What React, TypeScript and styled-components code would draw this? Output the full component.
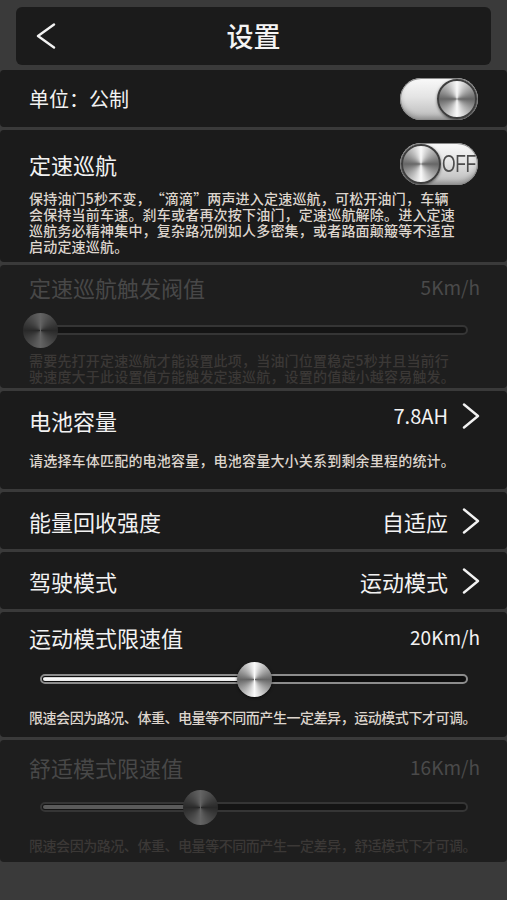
import React from 'react';
import styled, { createGlobalStyle } from 'styled-components';

const Global = createGlobalStyle`
  html, body { margin: 0; padding: 0; background: #3a3a3a; }
  body { font-family: "Noto Sans CJK SC", "Noto Sans", sans-serif; }
  * { box-sizing: border-box; }
`;

const Page = styled.div`
  width: 507px;
  min-height: 900px;
  background: #3a3a3a;
  padding-top: 7px;
  display: flex;
  flex-direction: column;
`;

const Header = styled.header`
  margin: 0 16px;
  height: 58px;
  background: #1b1b1b;
  border-radius: 6px;
  display: grid;
  grid-template-columns: 60px 1fr 60px;
  align-items: center;
`;

const BackBtn = styled.button`
  background: none;
  border: 0;
  padding: 0 0 0 20px;
  height: 100%;
  display: flex;
  align-items: center;
  cursor: pointer;
`;

const HeaderTitle = styled.h1`
  margin: 0;
  text-align: center;
  color: #f4f4f4;
  font-size: 27px;
  font-weight: 500;
  line-height: 58px;
`;

const List = styled.div`
  display: flex;
  flex-direction: column;
  gap: 3px;
  margin-top: 5px;
`;

const Card = styled.section<{ $h: number; $pt?: number; $center?: boolean; $dim?: boolean }>`
  height: ${p => p.$h}px;
  padding: ${p => p.$pt ?? 0}px 27px 0 29px;
  background: ${p => (p.$dim ? '#1e1e1e' : '#1b1b1b')};
  border-radius: 4px;
  display: flex;
  flex-direction: column;
  justify-content: ${p => (p.$center ? 'center' : 'flex-start')};
`;

const Row = styled.div<{ $h: number }>`
  height: ${p => p.$h}px;
  display: flex;
  align-items: center;
  justify-content: space-between;
`;

const Title = styled.div<{ $size?: number; $dim?: boolean }>`
  font-size: ${p => p.$size ?? 22}px;
  line-height: 28px;
  color: ${p => (p.$dim ? '#484848' : '#f2f2f2')};
  white-space: nowrap;
`;

const Trail = styled.div<{ $raise?: number }>`
  display: flex;
  align-items: center;
  gap: 14px;
  margin-bottom: ${p => (p.$raise ?? 0) * 2}px;
`;

const Value = styled.span<{ $size: number; $dim?: boolean }>`
  font-size: ${p => p.$size}px;
  line-height: 28px;
  color: ${p => (p.$dim ? '#4a4a4a' : '#f2f2f2')};
  white-space: nowrap;
`;

const Desc = styled.p<{ $mt: number; $dim?: boolean; $ls?: number }>`
  margin: ${p => p.$mt}px 0 0 0;
  font-size: 14px;
  font-weight: 500;
  letter-spacing: ${p => p.$ls ?? 0.2}px;
  line-height: 16px;
  color: ${p => (p.$dim ? '#3b3836' : '#ddd5cd')};
  white-space: nowrap;
`;

const Line = styled.span`
  display: block;
`;

const Quote = styled.span<{ $side: 'open' | 'close' }>`
  display: inline-block;
  width: 1em;
  text-align: ${p => (p.$side === 'open' ? 'right' : 'left')};
`;

const ToggleTrack = styled.div<{ $on: boolean }>`
  width: 78px;
  height: 42px;
  margin-right: 2px;
  border-radius: 21px;
  background: linear-gradient(180deg, #fafafa 0%, #e4e4e4 45%, #b8b8b8 100%);
  box-shadow: inset 0 0 0 1px #8c8c8c, inset 0 -3px 5px rgba(0, 0, 0, 0.25);
  display: flex;
  align-items: center;
  justify-content: ${p => (p.$on ? 'flex-end' : 'flex-start')};
  padding: 0 1px;
  overflow: hidden;
`;

const metal = `conic-gradient(#fafafa 0deg, #bfbfbf 35deg, #666 90deg, #bfbfbf 145deg, #fafafa 180deg, #bfbfbf 215deg, #666 270deg, #bfbfbf 325deg, #fafafa 360deg)`;

const ToggleKnob = styled.div`
  width: 40px;
  height: 40px;
  flex: none;
  border-radius: 50%;
  border: 2px solid #3e3e3e;
  background: ${metal};
  box-shadow: 0 1px 3px rgba(0, 0, 0, 0.5);
  position: relative;
  z-index: 1;
`;

const OffLabel = styled.span`
  font-family: "Liberation Sans", Arial, sans-serif;
  font-size: 23px;
  line-height: 1;
  letter-spacing: -0.5px;
  color: #4d4d4d;
  margin-left: 1px;
  display: inline-block;
  transform: scaleX(0.76);
  transform-origin: left center;
  white-space: nowrap;
`;

const SliderWrap = styled.div<{ $mt: number }>`
  position: relative;
  height: 36px;
  margin: ${p => p.$mt}px 12px 0 11px;
  display: flex;
  align-items: center;
`;

const Track = styled.div<{ $dim?: boolean }>`
  flex: 1;
  height: 10px;
  border-radius: 5px;
  border: 2px solid ${p => (p.$dim ? '#353535' : '#8c8c8c')};
  background: ${p => (p.$dim ? '#141414' : '#0d0d0d')};
  padding: 1px;
  display: flex;
`;

const Fill = styled.div<{ $dim?: boolean }>`
  height: 100%;
  border-radius: 2px;
  background: ${p => (p.$dim ? '#5a5a5a' : 'linear-gradient(180deg, #c4c4c4, #ffffff 40%, #e8e8e8)')};
`;

const SliderKnob = styled.div<{ $dim?: boolean }>`
  position: absolute;
  top: 50%;
  width: 35px;
  height: 35px;
  margin: -17.5px 0 0 -17.5px;
  border-radius: 50%;
  background: ${metal};
  box-shadow: ${p => (p.$dim ? 'none' : '0 1px 3px rgba(0, 0, 0, 0.6)')};
  filter: ${p => (p.$dim ? 'brightness(0.4)' : 'none')};
`;

const Chevron = () => (
  <svg width="18" height="26" viewBox="0 0 18 26">
    <polyline points="2,1.5 16,13 2,24.5" fill="none" stroke="#f2f2f2" strokeWidth="2.4" strokeLinecap="round" strokeLinejoin="round" />
  </svg>
);

const Toggle = ({ on }: { on: boolean }) => (
  <ToggleTrack $on={on}>
    <ToggleKnob />
    {!on && <OffLabel>OFF</OffLabel>}
  </ToggleTrack>
);

const Slider = ({ pct, dim, mt }: { pct: number; dim?: boolean; mt: number }) => (
  <SliderWrap $mt={mt}>
    <Track $dim={dim}>
      <Fill $dim={dim} style={{ width: `${pct}%` }} />
    </Track>
    <SliderKnob $dim={dim} style={{ left: `${pct}%` }} />
  </SliderWrap>
);

export default function App() {
  return (
    <>
      <Global />
      <Page>
        <Header>
          <BackBtn aria-label="返回">
            <svg width="20" height="26" viewBox="0 0 20 26">
              <polyline points="18,1.5 2,13 18,24.5" fill="none" stroke="#f2f2f2" strokeWidth="2.4" strokeLinecap="round" strokeLinejoin="round" />
            </svg>
          </BackBtn>
          <HeaderTitle>设置</HeaderTitle>
          <span />
        </Header>
        <List>
          <Card $h={57} $center>
            <Row $h={43}>
              <Title $size={20}>单位：公制</Title>
              <Toggle on />
            </Row>
          </Card>

          <Card $h={132} $pt={13}>
            <Row $h={42}>
              <Title>定速巡航</Title>
              <Toggle on={false} />
            </Row>
            <Desc $mt={5}>
              <Line>保持油门5秒不变，<Quote $side="open">“</Quote>滴滴<Quote $side="close">”</Quote>两声进入定速巡航，可松开油门，车辆</Line>
              <Line>会保持当前车速。刹车或者再次按下油门，定速巡航解除。进入定速</Line>
              <Line>巡航务必精神集中，复杂路况例如人多密集，或者路面颠簸等不适宜</Line>
              <Line>启动定速巡航。</Line>
            </Desc>
          </Card>

          <Card $h={123} $pt={8} $dim>
            <Row $h={28}>
              <Title $dim>定速巡航触发阀值</Title>
              <Value $size={19} $dim>5Km/h</Value>
            </Row>
            <Slider pct={0} dim mt={11} />
            <Desc $mt={4} $dim>
              <Line>需要先打开定速巡航才能设置此项，当油门位置稳定5秒并且当前行</Line>
              <Line>驶速度大于此设置值方能触发定速巡航，设置的值越小越容易触发。</Line>
            </Desc>
          </Card>

          <Card $h={98} $pt={15}>
            <Row $h={28}>
              <Title>电池容量</Title>
              <Trail $raise={4}>
                <Value $size={20}>7.8AH</Value>
                <Chevron />
              </Trail>
            </Row>
            <Desc $mt={18}>
              <Line>请选择车体匹配的电池容量，电池容量大小关系到剩余里程的统计。</Line>
            </Desc>
          </Card>

          <Card $h={57} $center>
            <Row $h={30}>
              <Title>能量回收强度</Title>
              <Trail>
                <Value $size={22}>自适应</Value>
                <Chevron />
              </Trail>
            </Row>
          </Card>

          <Card $h={57} $center>
            <Row $h={30}>
              <Title>驾驶模式</Title>
              <Trail>
                <Value $size={22}>运动模式</Value>
                <Chevron />
              </Trail>
            </Row>
          </Card>

          <Card $h={125} $pt={11}>
            <Row $h={28}>
              <Title>运动模式限速值</Title>
              <Value $size={19}>20Km/h</Value>
            </Row>
            <Slider pct={50} mt={10} />
            <Desc $mt={12} $ls={-0.45}>
              <Line>限速会因为路况、体重、电量等不同而产生一定差异，运动模式下才可调。</Line>
            </Desc>
          </Card>

          <Card $h={122} $pt={13} $dim>
            <Row $h={28}>
              <Title $dim>舒适模式限速值</Title>
              <Value $size={19} $dim>16Km/h</Value>
            </Row>
            <Slider pct={37.4} dim mt={8} />
            <Desc $mt={12} $dim $ls={-0.45}>
              <Line>限速会因为路况、体重、电量等不同而产生一定差异，舒适模式下才可调。</Line>
            </Desc>
          </Card>
        </List>
      </Page>
    </>
  );
}
